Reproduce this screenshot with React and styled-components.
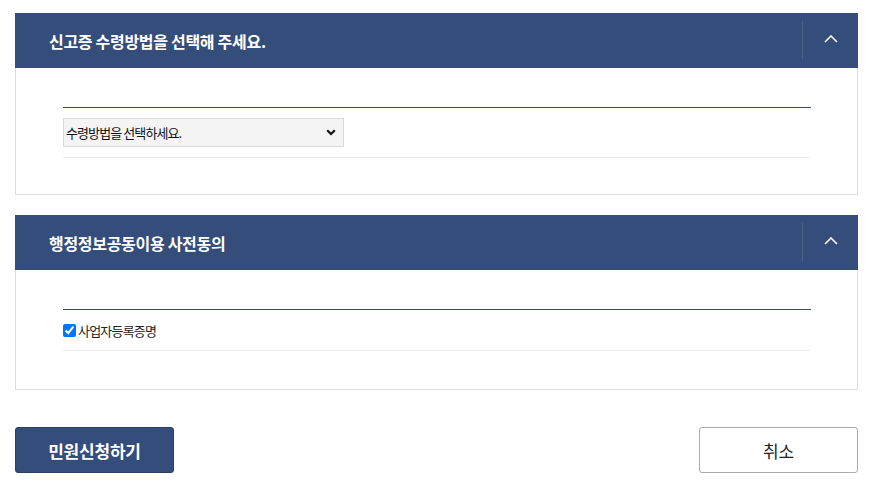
import React, { useState } from "react";
import styled, { createGlobalStyle } from "styled-components";

const GlobalStyle = createGlobalStyle`
  * { box-sizing: border-box; }
  body {
    margin: 0;
    background: #fff;
    font-family: "Noto Sans CJK KR", "Noto Sans", sans-serif;
    color: #222;
  }
`;

const NAVY = "#344d7a";

const Page = styled.div`
  padding: 13px 14px 18px 15px;
  display: flex;
  flex-direction: column;
  gap: 20px;
`;

const Panel = styled.section`
  display: flex;
  flex-direction: column;
`;

const PanelHeader = styled.div`
  height: 55px;
  background: ${NAVY};
  display: flex;
  align-items: center;
  justify-content: space-between;
`;

const PanelTitle = styled.h2`
  margin: 0;
  padding-left: 34px;
  font-size: 16px;
  font-weight: 700;
  letter-spacing: -0.3px;
  color: #fff;
`;

const Toggle = styled.button`
  width: 56px;
  height: 38px;
  margin-bottom: 1px;
  border: none;
  border-left: 1px solid rgba(255, 255, 255, 0.12);
  background: transparent;
  display: flex;
  align-items: center;
  justify-content: center;
  padding: 0 0 2px 0;
  cursor: pointer;
`;

const PanelBody = styled.div`
  border: 1px solid #dcdcdc;
  border-top: none;
  padding: 39px 46px ${(p) => p.$bottom} 47px;
`;

const Row = styled.div`
  border-top: 1px solid #3c4a68;
  border-bottom: 1px solid #ececec;
  padding: ${(p) => p.$pad};
  display: flex;
  align-items: center;
`;

const SelectWrap = styled.div`
  position: relative;
  width: 281px;
  height: 29px;
`;

const Select = styled.select`
  appearance: none;
  width: 100%;
  height: 100%;
  background: #f4f4f4;
  border: 1px solid #d9d9d9;
  border-radius: 0;
  padding: 0 0 0 2px;
  font-family: "Noto Sans CJK KR", sans-serif;
  font-size: 13px;
  letter-spacing: -0.9px;
  color: #111;
  outline: none;
`;

const Caret = styled.svg`
  position: absolute;
  right: 8px;
  top: 11px;
  pointer-events: none;
`;

const CheckLabel = styled.label`
  display: flex;
  align-items: center;
  height: 16px;
  font-size: 13px;
  letter-spacing: -0.8px;
  color: #222;
  gap: 2px;
  input {
    margin: 0;
    width: 13px;
    height: 13px;
    accent-color: #0075ff;
  }
`;

const Actions = styled.div`
  display: flex;
  justify-content: space-between;
  margin-top: 17px;
`;

const Button = styled.button`
  width: 159px;
  height: 46px;
  border-radius: 3px;
  font-family: "Noto Sans CJK KR", sans-serif;
  font-size: 17px;
  letter-spacing: -0.2px;
  cursor: pointer;
  background: ${(p) => (p.$primary ? NAVY : "#fff")};
  color: ${(p) => (p.$primary ? "#fff" : "#222")};
  font-weight: ${(p) => (p.$primary ? 700 : 400)};
  border: 1px solid ${(p) => (p.$primary ? "#2b3f63" : "#aaa")};
`;

const UpIcon = () => (
  <svg width="14" height="8" viewBox="0 0 14 8">
    <path d="M1 7 L7 1 L13 7" fill="none" stroke="#fff" strokeWidth="1.6" />
  </svg>
);

export default function App() {
  const [checked, setChecked] = useState(true);
  return (
    <>
      <GlobalStyle />
      <Page>
        <Panel>
          <PanelHeader>
            <PanelTitle>신고증 수령방법을 선택해 주세요.</PanelTitle>
            <Toggle aria-label="접기">
              <UpIcon />
            </Toggle>
          </PanelHeader>
          <PanelBody $bottom="36px">
            <Row $pad="10px 0">
              <SelectWrap>
                <Select defaultValue="">
                  <option value="">수령방법을 선택하세요.</option>
                  <option value="mail">우편</option>
                  <option value="visit">방문</option>
                </Select>
                <Caret width="10" height="7" viewBox="0 0 10 7">
                  <path d="M1.2 1.2 L5 5 L8.8 1.2" fill="none" stroke="#111" strokeWidth="2.2" />
                </Caret>
              </SelectWrap>
            </Row>
          </PanelBody>
        </Panel>

        <Panel>
          <PanelHeader>
            <PanelTitle>행정정보공동이용 사전동의</PanelTitle>
            <Toggle aria-label="접기">
              <UpIcon />
            </Toggle>
          </PanelHeader>
          <PanelBody $bottom="38px">
            <Row $pad="12px 0 12px">
              <CheckLabel>
                <input
                  type="checkbox"
                  checked={checked}
                  onChange={(e) => setChecked(e.target.checked)}
                />
                사업자등록증명
              </CheckLabel>
            </Row>
          </PanelBody>
        </Panel>

        <Actions>
          <Button $primary>민원신청하기</Button>
          <Button>취소</Button>
        </Actions>
      </Page>
    </>
  );
}
